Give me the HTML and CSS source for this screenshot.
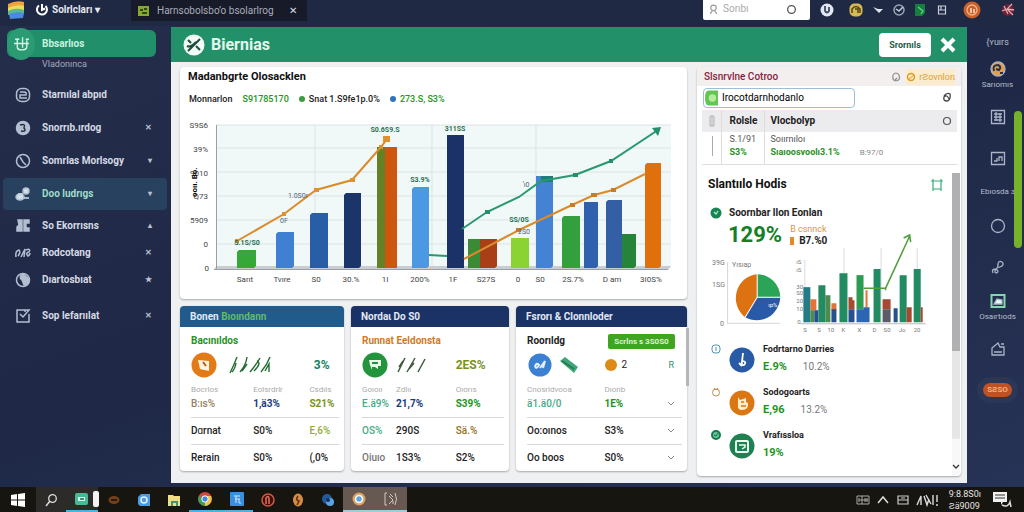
FILE: index.html
```html
<!DOCTYPE html>
<html lang="en">
<head>
    <meta charset="UTF-8">
    <meta name="viewport" content="width=device-width, initial-scale=1.0">
    <title>Biernias</title>
    <link rel="stylesheet" href="styles.css">
</head>
<body>

    <!-- Top bar -->
    <header class="topbar">
        <div class="brand">
            <svg class="logo" viewBox="0 0 16 18"><path d="M0 3Q8-1 16 1V6Q8 4 0 9Z" fill="#f0a23c"/><path d="M0 7Q8 3 16 5V10Q8 8 0 12Z" fill="#e9dc62"/><path d="M0 10Q8 6 16 9V13Q8 11 0 14Z" fill="#5bb98c"/><path d="M1 13Q8 10 16 12L15 17L2 18Z" fill="#4a8be0"/></svg>
            <svg class="swirl" viewBox="0 0 12 14"><path d="M3 2.500A5 5 0 1 0 9.500 3M6 1V7L9 5.500" fill="none" stroke="#fff" stroke-width="2"/></svg>
            <button class="account">Solrlcları <span>▾</span></button>
        </div>
        <div class="tab">
            <svg viewBox="0 0 11 10"><path d="M0 0H11V10H0Z" fill="#86a82b"/><path d="M2 3H5V5H2ZM6 2H9V4H6ZM4 6H9V8H4Z" fill="#2e4a17"/></svg>
            <span>Harnsobolsboʼo bsolarlrog</span>
            <button class="tab-close" aria-label="Close tab">✕</button>
        </div>
        <div class="search">
            <svg viewBox="0 0 10 10"><circle cx="5" cy="3.500" r="2.500" fill="none" stroke="#999"/><path d="M2 9L4 6M8 9L6 6" stroke="#999"/></svg>
            <input type="text" placeholder="Sorıbı" aria-label="Search">
            <svg viewBox="0 0 10 10"><circle cx="5" cy="5" r="3.500" fill="none" stroke="#555" stroke-width="1.200"/></svg>
        </div>
        <div class="tray">
            <svg viewBox="0 0 14 14"><circle cx="7" cy="7" r="6.500" fill="#e3e7f0"/><path d="M5 3V8Q7 11 9 8V4" fill="none" stroke="#3a4a68" stroke-width="1.800"/></svg>
            <svg viewBox="0 0 14 14"><rect x="0.500" y="0.500" width="13" height="13" rx="5" fill="#d6b955"/><path d="M3 10V6Q7 1 11 6V10M6 6H9V10" fill="none" stroke="#4f4414" stroke-width="1.500"/></svg>
            <svg viewBox="0 0 14 14"><path d="M2 4L7 6L12 6L8 10L6 8Z" fill="#dfe4ee"/></svg>
            <svg viewBox="0 0 14 14"><circle cx="7" cy="7" r="5" fill="none" stroke="#99a3b5" stroke-width="1.500"/><path d="M4 6L7 8L11 4" fill="none" stroke="#c4cbd8" stroke-width="1.500"/></svg>
            <svg viewBox="0 0 14 14"><path d="M2 1H12V10L9 13H2Z" fill="#15803d"/><path d="M5 4L10 8L8 11" fill="none" stroke="#63d08b" stroke-width="1.300"/></svg>
            <svg viewBox="0 0 14 14"><path d="M3.500 3V11H10.500V3ZM3 7H11M6 3V7" fill="none" stroke="#c7cddb" stroke-width="1.200"/></svg>
            <svg class="avatar" viewBox="0 0 18 18"><circle cx="9" cy="9" r="8.500" fill="#c9602a"/><circle cx="9" cy="9" r="5" fill="none" stroke="#f2b48c" stroke-width="1.300"/><path d="M8 12V7M11 12V8" stroke="#fbe0cf" stroke-width="1.500"/></svg>
            <svg viewBox="0 0 14 14"><circle cx="7" cy="7" r="6" fill="#6d2036"/><path d="M1 8L6 6L11 1M6 6L13 7M6 6L12 12M3 3L7 11" stroke="#e9a7b0" stroke-width="1.300"/></svg>
        </div>
    </header>

    <div class="shell">

        <!-- Left navigation -->
        <nav class="sidebar">
            <a href="#" class="nav-main">
                <span class="nav-badge"><svg viewBox="0 0 16 16"><path d="M2 4H6M9 2V12M12 4H15M1 8H15M4 3V11Q4 14 8 14Q13 14 13 11V5" fill="none" stroke="#d5f3e4" stroke-width="1.300"/></svg></span>
                Bbsarlıos
            </a>
            <a href="#" class="nav-sub">Vladonınca</a>
            <a href="#" class="nav-item">
                <svg viewBox="0 0 16 16"><rect x="1.500" y="1.500" width="13" height="13" rx="5"/><path d="M5 5H9Q12 5 11 8H5V11H12"/></svg>
                <span>Starnılal abpıd</span>
            </a>
            <a href="#" class="nav-item">
                <svg viewBox="0 0 16 16"><circle cx="8" cy="8" r="6.500" fill="#b4bed0"/><path d="M5 5Q11 3 9 8Q12 12 6 11" stroke="#222c49"/></svg>
                <span>Snorrıb.ırdog</span><i>✕</i>
            </a>
            <a href="#" class="nav-item">
                <svg viewBox="0 0 16 16"><circle cx="8" cy="8" r="6.500"/><path d="M5 4L8 9L11 12"/></svg>
                <span>Somrlas Morlsogy</span><i>▾</i>
            </a>
            <a href="#" class="nav-item selected">
                <svg viewBox="0 0 16 16"><circle cx="11" cy="5" r="3" fill="#cfe0ea"/><ellipse cx="5" cy="11" rx="4" ry="3" fill="#cfe0ea"/><path d="M3 8H8M9 12H14" stroke="#cfe0ea"/></svg>
                <span>Doo ludrıgs</span><i>▾</i>
            </a>
            <a href="#" class="nav-item compact">
                <svg viewBox="0 0 16 16"><path d="M3 2H7V13H2V9L4 7ZM9 2H14V5H11V10H14V13H9Z" fill="#b4bed0"/></svg>
                <span>So Ekorrısns</span><i>▴</i>
            </a>
            <a href="#" class="nav-item compact">
                <svg viewBox="0 0 16 16"><path d="M1 12Q0 6 4 5Q6 7 3 11M6 12L10 4L9 12M11 5Q16 3 14 7Q10 8 13 11Q15 10 15 8"/></svg>
                <span>Rodcotang</span><i>✕</i>
            </a>
            <a href="#" class="nav-item compact">
                <svg viewBox="0 0 16 16"><circle cx="8" cy="8" r="6.500"/><path d="M8 2Q3 5 7 8L9 13Q14 12 14 7Z" fill="#b4bed0"/></svg>
                <span>Dıartosbıat</span><i>★</i>
            </a>
            <a href="#" class="nav-item last">
                <svg viewBox="0 0 16 16"><path d="M14 6V14H2V2H14L8 9L5 6M10 2V4"/></svg>
                <span>Sop lefarıılat</span><i>✕</i>
            </a>
        </nav>

        <!-- Main window -->
        <main class="window">
            <div class="window-head">
                <svg class="window-icon" viewBox="0 0 22 22"><circle cx="11" cy="11" r="10.500" fill="#f2fbf7"/><path d="M5 17L17 5M5 6L8 9M13 12L17 16M4 12Q8 14 13 8" fill="none" stroke="#1c4d3d" stroke-width="2"/></svg>
                <h1>Biernias</h1>
                <button class="save">Srornıls</button>
                <button class="close" aria-label="Close"><svg viewBox="0 0 16 16"><path d="M2 2L14 14M14 2L2 14" stroke="#fff" stroke-width="4"/></svg></button>
            </div>

            <div class="content">
                <section class="left">

                    <!-- Chart -->
                    <div class="card chart-card">
                        <h2>Madanbgrte Olosacklen</h2>
                        <div class="legend">
                            <span>Monnarlon</span>
                            <span class="green">S91785170</span>
                            <span class="dot dot-green">Snat 1.S9fe1p.0%</span>
                            <span class="dot dot-blue green">273.S, S3%</span>
                        </div>
                        <svg class="chart" viewBox="180 118 507 176">
                            <rect x="216" y="125" width="455" height="143" fill="#f1f8f8"/>
                            <path d="M216 125H671M216 148H671M216 172H671M216 196H671M216 220H671M216 244H671M315 125V268M432 125V268M536 125V268" stroke="#dbe3e7" stroke-width="1"/>
                            <path d="M214 269L217 266H671L668 270H214Z" fill="#c9ccd0"/>
                            <path d="M216.500 125V269M214 269.500H668" stroke="#9a9fa5"/>
                            <g>
                                <path d="M237 268V252L239 250H256V266L254 268Z" fill="#36a83a"/>
                                <path d="M276 268V234L278 232H294V266L292 268Z" fill="#3f80d2"/>
                                <path d="M310 268V215L312 213H328V268Z" fill="#295da6"/>
                                <path d="M344 268V195L346 193H361V266L359 268Z" fill="#1b3469"/>
                                <path d="M377 147H386V268H377Z" fill="#648126"/>
                                <path d="M385 147H397V268H385Z" fill="#cf560e"/>
                                <path d="M412 268V189L414 187H429V266L427 268Z" fill="#4b98e3"/>
                                <path d="M447 135H464V268H447Z" fill="#1a3267"/>
                                <path d="M468 239H481V268H468Z" fill="#3d8a36"/>
                                <path d="M480 239H497V266L495 268H480Z" fill="#a93f17"/>
                                <path d="M511 238H529V268H511Z" fill="#8bd332"/>
                                <path d="M536 176H553V266L551 268H536Z" fill="#4482d3"/>
                                <path d="M541 176H553V182H541Z" fill="#1e7d78"/>
                                <path d="M562 268V218L564 216H580V268Z" fill="#34a03d"/>
                                <path d="M584 202H598V266L596 268H584Z" fill="#3061af"/>
                                <path d="M606 268V202L608 200H622V268Z" fill="#355fa5"/>
                                <path d="M622 234H636V266L634 268H622Z" fill="#268439"/>
                                <path d="M645 268V165L647 163H661V266L659 268Z" fill="#e0700c"/>
                            </g>
                            <polyline class="line orange-line" points="237,241 284,214 316,190 352,180 381,147 387,139"/>
                            <path d="M235 239H239V243H235ZM282 212H286V216H282ZM314 188H319V192H314ZM350 178H355V182H350ZM379 145H383V149H379ZM383 136H390V142H383Z" fill="#dd922f"/>
                            <polyline class="line teal-line" points="429,255 447,256"/>
                            <polyline class="line teal-line" points="462,229 487,212 519,197 541,181 575,175 611,161 658,130"/>
                            <path d="M652 128L661 127L658 136ZM485 210H490V214H485ZM573 173H578V177H573ZM609 159H613V163H609Z" fill="#239069"/>
                            <polyline class="line orange-line" points="464,259 519,230 572,205 594,195 613,190 645,174"/>
                            <path d="M516 228H521V232H516ZM570 203H575V207H570ZM591 193H597V197H591ZM611 188H616V192H611Z" fill="#cb7b25"/>
                            <g class="axis" text-anchor="end">
                                <text x="208" y="128">S9S6</text>
                                <text x="208" y="152">39%</text>
                                <text x="208" y="176">9010</text>
                                <text x="208" y="199">Q73</text>
                                <text x="208" y="223">5909</text>
                                <text x="208" y="247">0</text>
                                <text x="209" y="271">0</text>
                            </g>
                            <text class="axis-title" transform="translate(197 197) rotate(-90)">ooıı. Bo.</text>
                            <g class="axis" text-anchor="middle">
                                <text x="245" y="282">Sarıt</text>
                                <text x="282" y="282">Tvıre</text>
                                <text x="316" y="282">S0</text>
                                <text x="351" y="282">30.%</text>
                                <text x="385" y="282">1I</text>
                                <text x="420" y="282">200%</text>
                                <text x="453" y="282">1F</text>
                                <text x="486" y="282">S27S</text>
                                <text x="518" y="282">0</text>
                                <text x="540" y="282">S0</text>
                                <text x="573" y="282">2S.7%</text>
                                <text x="612" y="282">D am</text>
                                <text x="651" y="282">3I0S%</text>
                            </g>
                            <g class="bar-label" text-anchor="middle">
                                <text x="385" y="132">S0.6S9.S</text>
                                <text x="420" y="182">S3.9%</text>
                                <text x="455" y="131">311SS</text>
                                <text x="247" y="245">S.1S/S0</text>
                                <text x="519" y="222">SS/0S</text>
                            </g>
                            <g class="bar-label muted" text-anchor="middle">
                                <text x="298" y="198">1.0S0r</text>
                                <text x="284" y="223">0F</text>
                                <text x="526" y="187">ʼı0</text>
                                <text x="524" y="234">2S0</text>
                            </g>
                        </svg>
                    </div>

                    <!-- Summary cards -->
                    <div class="cards">
                        <article class="card stat-card first">
                            <h3>Bonen <em>Bıoındann</em></h3>
                            <h4 class="green">Bacınıldos</h4>
                            <div class="stat-row">
                                <div class="stat-icons">
                                    <svg class="round" viewBox="0 0 26 26"><circle cx="13" cy="13" r="12.500" fill="#e47a16"/><path d="M7 8L18 9V19L9 17Z" fill="#fff4df"/><path d="M12 10L15 14" stroke="#c25d0e" stroke-width="2"/></svg>
                                    <svg class="scribble" viewBox="0 0 42 20"><path d="M1 18Q5 10 8 2M3 17Q6 14 7 8M11 17Q17 10 18 2M13 16L18 9M21 17Q27 10 31 3M25 16Q33 8 28 6M32 17Q38 10 41 2M36 16L40 9V17" fill="none" stroke="#216d32" stroke-width="1.400"/></svg>
                                </div>
                                <strong class="teal">3%</strong>
                            </div>
                            <table>
                                <thead><tr><th>Bocrlos</th><th>Eolsrdrlr</th><th>Csdıls</th></tr></thead>
                                <tbody>
                                    <tr class="lead"><td class="brown">B:ıs%</td><td class="navy">1,ä3%</td><td class="olive">S21%</td></tr>
                                    <tr><td>Dɑrnat</td><td>S0%</td><td class="lime">E,6%</td></tr>
                                    <tr><td>Rerain</td><td>S0%</td><td>(,0%</td></tr>
                                </tbody>
                            </table>
                        </article>

                        <article class="card stat-card second">
                            <h3>Nordaɩ Do S0</h3>
                            <h4 class="orange">Runnat Eeldonsta</h4>
                            <div class="stat-row">
                                <div class="stat-icons">
                                    <svg class="round" viewBox="0 0 26 26"><circle cx="13" cy="13" r="12.500" fill="#22943b"/><path d="M7 8H19V14H16V17L13 15H10V18L8 13Z" fill="#e8ffe9"/><path d="M10 11H16" stroke="#22943b" stroke-width="2"/></svg>
                                    <svg class="scribble short" viewBox="0 0 30 20"><path d="M2 17L9 3M11 17L19 3M22 17L29 4M3 12L7 6M13 14L18 8" stroke="#3f5b40" stroke-width="1.500"/></svg>
                                </div>
                                <strong class="olive">2ES%</strong>
                            </div>
                            <table>
                                <thead><tr><th>Goıoıı</th><th>Zdlıı</th><th>Oıorıs</th></tr></thead>
                                <tbody>
                                    <tr class="lead"><td class="mint">E.ä9%</td><td class="navy">21,7%</td><td class="green">S39%</td></tr>
                                    <tr><td class="mint">OS%</td><td>290S</td><td class="gold">Sä.%</td></tr>
                                    <tr><td class="grey">Oiuıo</td><td>1S3%</td><td>S2%</td></tr>
                                </tbody>
                            </table>
                        </article>

                        <article class="card stat-card third">
                            <h3>Fsrorı &amp; Clonnloder</h3>
                            <div class="title-row">
                                <h4>Roorıldg</h4>
                                <button class="tag">Scrlns s 3S0S0</button>
                            </div>
                            <div class="stat-row">
                                <div class="stat-icons">
                                    <svg class="round" viewBox="0 0 26 26"><circle cx="13" cy="13" r="11.500" fill="#3b80d2"/><path d="M8 15Q9 10 12 13Q9 18 8 14M13 16L18 9L16 16" fill="none" stroke="#e4f1ff" stroke-width="2"/></svg>
                                    <svg class="ticket" viewBox="0 0 20 18"><path d="M1 5L6 1L19 11L15 17Z" fill="#3ea679"/><path d="M3 5L15 13" stroke="#257b56" stroke-width="2"/></svg>
                                </div>
                                <span class="coin">2</span>
                                <span class="mark">R</span>
                            </div>
                            <table>
                                <thead><tr><th>Cnosrldvooa</th><th>Dıonb</th><th></th></tr></thead>
                                <tbody>
                                    <tr class="lead"><td class="mint">ä1.ä0/0</td><td class="green">1E%</td><td class="chev"><svg viewBox="0 0 8 5"><path d="M1 1L4 4L7 1"/></svg></td></tr>
                                    <tr><td>Oo:oınos</td><td>S3%</td><td class="chev"><svg viewBox="0 0 8 5"><path d="M1 1L4 4L7 1"/></svg></td></tr>
                                    <tr><td>Oo boos</td><td>S0%</td><td class="chev"><svg viewBox="0 0 8 5"><path d="M1 1L4 4L7 1"/></svg></td></tr>
                                </tbody>
                            </table>
                            <span class="card-scroll"></span>
                        </article>
                    </div>
                </section>

                <!-- Details panel -->
                <aside class="card panel">
                    <div class="panel-head">
                        <h3>Slsnrvlne Cotroo</h3>
                        <svg viewBox="0 0 10 10"><path d="M2 3Q5-1 8 3Q10 8 5 9Q1 9 2 3M6 6L3 9" fill="none" stroke="#8d8d8d" stroke-width="1.200"/></svg>
                        <a href="#"><svg viewBox="0 0 10 10"><circle cx="5" cy="5" r="3.500" fill="none" stroke="#e09b1d" stroke-width="1.500"/><path d="M2 8L8 3" stroke="#e09b1d"/></svg>rƧovnlorɩ</a>
                    </div>
                    <div class="panel-search">
                        <div class="field">
                            <svg viewBox="0 0 14 16"><path d="M4 0H14V16H4Q0 16 0 8Q0 0 4 0Z" fill="#65c554"/><circle cx="8" cy="8" r="4" fill="#b5ec9c"/></svg>
                            <input type="text" value="Irocotdarnhodanlo" aria-label="Filter">
                        </div>
                        <svg class="panel-icon" viewBox="0 0 10 12"><path d="M2 4Q5 0 8 2Q9 8 5 9Q1 9 2 5Q5 2 7 7" fill="none" stroke="#444" stroke-width="1.300"/></svg>
                    </div>
                    <table class="grid">
                        <thead>
                            <tr><th><svg viewBox="0 0 6 12"><path d="M1 1H5V11H1ZM3 1V11" fill="none" stroke="#b0b0b6"/></svg></th><th>Rolsle</th><th>Vlocbolyp</th><th><svg class="ring" viewBox="0 0 10 10"><circle cx="5" cy="5" r="3.500" fill="none" stroke="#555" stroke-width="1.200"/></svg></th></tr>
                        </thead>
                        <tbody>
                            <tr><td rowspan="2" class="tick"></td><td>S.1/91</td><td colspan="2">Soıırnıloı</td></tr>
                            <tr><td class="green">S3%</td><td colspan="2"><b class="green">Sıaıoosvoolı3.1%</b><span class="aside">B:97/0</span></td></tr>
                        </tbody>
                    </table>

                    <div class="details">
                        <div class="details-head">
                            <h2>Slantıılo Hodis</h2>
                            <svg viewBox="0 0 12 12"><path d="M2 2H10V10H2ZM0 2H12M2 0V12M10 0V12" fill="none" stroke="#3ba77a" stroke-width="1.200"/></svg>
                        </div>
                        <div class="metric-title">
                            <svg viewBox="0 0 12 12"><circle cx="6" cy="6" r="5.500" fill="#188454"/><path d="M4 5L6 7L8 4" fill="none" stroke="#b8f0d0" stroke-width="1.200"/></svg>
                            <h3>Soornbar llon Eonlan</h3>
                        </div>
                        <div class="metric">
                            <strong>129%</strong>
                            <p><span>B csnnck</span><b><i></i>B7.%0</b></p>
                        </div>
                        <svg class="mini" viewBox="697 232 250 104">
                            <path d="M727.500 262V323H780" fill="none" stroke="#d4d6d8"/>
                            <g class="mini-axis">
                                <text x="712" y="265">39G</text>
                                <text x="712" y="287">1SG</text>
                                <text x="720" y="326">0</text>
                                <text x="732" y="267">Yısıap</text>
                            </g>
                            <path d="M757 297V274A23 23 0 0 1 780 297Z" fill="#2ca458"/>
                            <path d="M757 297H780A23.500 24 0 0 1 745 317Z" fill="#295aa8"/>
                            <path d="M757 297L745 317A23.500 24 0 0 1 757 274Z" fill="#dd7212"/>
                            <path d="M757 273V297H780M757 297L745 317" fill="none" stroke="#fff" stroke-width="1"/>
                            <text x="768" y="307" class="pie-text">ıp%</text>
                            <path d="M843.500 248V322M880.500 248V322M916.500 248V322M804.500 260V322" stroke="#d9dcde"/>
                            <path d="M803 287H810V322H803Z" fill="#237b86"/>
                            <path d="M810 299H816V310H810ZM831 303H836V310H831ZM865 290H867V307H865Z" fill="#e2743a"/>
                            <path d="M810 310H814V322H810ZM825 295H830V322H825Z" fill="#4d8b50"/>
                            <path d="M814 310H818V322H814ZM831 309H836V322H831ZM893 308H897V322H893ZM848 309H854V322H848Z" fill="#28508f"/>
                            <path d="M818 285H825V322H818ZM839 273H847V322H839ZM873 269H880V322H873ZM899 275H906V322H899ZM913 269H920V322H913Z" fill="#238b62"/>
                            <path d="M856 275H863V309H856Z" fill="#2d9b51"/>
                            <path d="M856 309H863V322H856ZM863 307H869V322H863Z" fill="#2c66b3"/>
                            <path d="M848 297H852V300H854V309H848ZM882 299H890V309H882ZM906 307H911V322H906ZM920 307H922V322H920Z" fill="#a54a31"/>
                            <path d="M882 309H890V322H882Z" fill="#5c5b67"/>
                            <path d="M800 323.500H925" stroke="#b6b8ba"/>
                            <path d="M863 288H885L909 236M903 238L909 235L910 242M885 287V290" fill="none" stroke="#4d9d3b" stroke-width="1.500"/>
                            <g class="mini-axis tiny">
                                <text x="796" y="264">ıS</text><text x="796" y="272">ıS</text><text x="796" y="289">30</text><text x="796" y="295">S0</text><text x="796" y="303">20</text><text x="796" y="311">10</text><text x="797" y="324">0</text>
                                <text x="803" y="332">S</text><text x="817" y="332">S</text><text x="827" y="332">10</text><text x="841" y="332">K</text><text x="857" y="332">X</text><text x="872" y="332">D</text><text x="883" y="332">S0</text><text x="898" y="332">Jo</text><text x="913" y="332">20</text>
                            </g>
                        </svg>
                        <ul class="list">
                            <li>
                                <svg class="bullet" viewBox="0 0 10 10"><rect x="1" y="1" width="8" height="8" rx="3" fill="none" stroke="#4f93b5"/><path d="M5 3V7" stroke="#4f93b5"/></svg>
                                <svg class="round" viewBox="0 0 26 26"><circle cx="13" cy="13" r="12.500" fill="#295aa6"/><path d="M14 6L13 15Q12 19 15 18Q18 15 14 14M10 16L13 19" fill="none" stroke="#fff" stroke-width="1.800"/></svg>
                                <div><h4>Fodrtarno Darries</h4><p><b>E.9%</b><span>10.2%</span></p></div>
                            </li>
                            <li>
                                <svg class="bullet" viewBox="0 0 10 10"><circle cx="5" cy="5.500" r="3.500" fill="none" stroke="#c88a4f"/><path d="M3 1L5 3L7 1" fill="none" stroke="#c88a4f"/></svg>
                                <svg class="round" viewBox="0 0 26 26"><circle cx="13" cy="13" r="12.500" fill="#da7614"/><path d="M9 7L11 10L17 8V12L19 13Q20 20 13 20Q8 20 9 14Z" fill="#ffedc9"/><path d="M12 12H15M12 16H17" stroke="#da7614" stroke-width="1.500"/></svg>
                                <div><h4>Sodogoarts</h4><p><b>E,96</b><span>13.2%</span></p></div>
                            </li>
                            <li>
                                <svg class="bullet" viewBox="0 0 10 10"><circle cx="5" cy="5" r="4" fill="#70c39b" stroke="#137b4c" stroke-width="2"/><path d="M3 5L5 6L7 3" fill="none" stroke="#0f6f42"/></svg>
                                <svg class="round" viewBox="0 0 26 26"><circle cx="13" cy="13" r="12.500" fill="#1f8150"/><rect x="7" y="8" width="12" height="11" rx="1" fill="none" stroke="#eafff2" stroke-width="2"/><path d="M10 12H16V14L13 16" fill="none" stroke="#eafff2" stroke-width="1.500"/></svg>
                                <div><h4>Vrafıssloa</h4><p><b>19%</b></p></div>
                            </li>
                        </ul>
                        <div class="scrollbar"><span></span><svg viewBox="0 0 8 5"><path d="M1 1L4 4L7 1" fill="none" stroke="#333" stroke-width="1.300"/></svg></div>
                    </div>
                </aside>
            </div>
        </main>

        <!-- Right rail -->
        <nav class="rail">
            <a href="#" class="rail-text big">{ʏuırs</a>
            <a href="#"><svg viewBox="0 0 16 16"><circle cx="8" cy="8" r="7" fill="#e5a047"/><path d="M4 10Q2 4 8 4Q12 6 9 9L6 8M10 12H13" fill="none" stroke="#233152" stroke-width="2"/></svg>Sarıomıs</a>
            <a href="#"><svg viewBox="0 0 16 16"><path d="M1.500 1.500H14.500V14.500H1.500ZM4 5H12M4 8H12M4 11H12M6 3V12M10 4V13"/></svg></a>
            <a href="#"><svg viewBox="0 0 16 16"><path d="M1.500 2.500H14.500V14.500H1.500ZM4 11H7V8M9 11V7H12V11"/></svg></a>
            <a href="#" class="rail-text">Ebıosda ɜ</a>
            <a href="#"><svg viewBox="0 0 16 16"><circle cx="8" cy="8" r="6.500"/></svg></a>
            <a href="#"><svg viewBox="0 0 16 16"><path d="M3 14Q1 10 6 10Q10 13 6 14Q3 13 8 8M8 6Q8 1 12 3Q15 6 10 8Q7 9 8 5"/></svg></a>
            <a href="#"><svg viewBox="0 0 16 16"><path d="M1.500 2H14.500V14H1.500Z" stroke="#83d8aa" stroke-width="2"/><path d="M4 11L7 6L12 7V11Z" fill="#e5fff3"/></svg>Osaırtıods</a>
            <a href="#"><svg viewBox="0 0 16 16"><path d="M2 14V7L8 2L10 6H14V14ZM4 11H12M11 3H14"/></svg></a>
            <a href="#"><span class="pill">SƧSO</span></a>
            <span class="rail-scroll"></span>
        </nav>
    </div>

    <!-- Taskbar -->
    <footer class="taskbar">
        <button class="start" aria-label="Start"><svg viewBox="0 0 14 14"><path d="M0 2L6 1V6.500H0ZM7 1L14 0V6.500H7ZM0 7.500H6V13L0 12ZM7 7.500H14V14L7 13Z" fill="#fff"/></svg></button>
        <button class="find" aria-label="Find"><svg viewBox="0 0 14 14"><circle cx="8.500" cy="5.500" r="3.800" fill="none" stroke="#ddd" stroke-width="1.300"/><path d="M6 8L2 13" stroke="#ddd" stroke-width="1.500"/></svg></button>
        <button class="running" aria-label="Monitor"><svg viewBox="0 0 14 14"><rect x="0" y="1" width="13" height="12" rx="2" fill="#46b997"/><path d="M3 5H10V9H3Z" fill="#d4f6e9"/><path d="M5 7H9" stroke="#1b6b58" stroke-width="1.500"/></svg></button>
        <span class="sliver"></span>
        <button aria-label="Disk"><svg viewBox="0 0 14 14"><ellipse cx="7" cy="7" rx="5.500" ry="4" fill="#74401c"/><path d="M4 7H10" stroke="#2c1a0e" stroke-width="2"/></svg></button>
        <button aria-label="Mail"><svg viewBox="0 0 14 14"><path d="M1 4L4 1H13V13H3L1 11Z" fill="#4d9be0"/><circle cx="7" cy="7" r="3" fill="none" stroke="#e1f1ff" stroke-width="1.500"/></svg></button>
        <button aria-label="Files"><svg viewBox="0 0 14 14"><path d="M1 2H6L7 3H13V13H1Z" fill="#f0df82"/><path d="M4 8H11V13H9V10H6V13H4Z" fill="#469079"/></svg></button>
        <button class="running" aria-label="Browser"><svg viewBox="0 0 14 14"><circle cx="7" cy="7" r="7" fill="#d4473b"/><path d="M7 7L1 4A7 7 0 0 0 7 14Z" fill="#35a25b"/><path d="M7 7V14A7 7 0 0 0 13 4H7Z" fill="#edc744"/><circle cx="7" cy="7" r="3.200" fill="#4786d8" stroke="#fff"/></svg></button>
        <button class="running" aria-label="Notes"><svg viewBox="0 0 14 14"><rect width="14" height="14" rx="1" fill="#3a8fe0"/><path d="M4 4H10M5 7H10M6 4V11M9 7V11H11" fill="none" stroke="#c8e6ff"/></svg></button>
        <button aria-label="Music"><svg viewBox="0 0 14 14"><circle cx="7" cy="7" r="6" fill="#38130d" stroke="#d55740" stroke-width="1.500"/><path d="M5 11V5Q7 2 8 5V11" fill="none" stroke="#e4705a" stroke-width="1.500"/></svg></button>
        <button aria-label="Paint"><svg viewBox="0 0 14 14"><ellipse cx="7" cy="7" rx="5" ry="6.500" fill="#d48c42"/><path d="M7 3Q4 7 8 8L6 12" fill="none" stroke="#5b2d12" stroke-width="1.500"/></svg></button>
        <button aria-label="Cloud"><svg viewBox="0 0 14 14"><circle cx="6" cy="6" r="5" fill="#245a9b"/><circle cx="9" cy="9" r="4" fill="#5ba1e8"/><circle cx="7" cy="7" r="2" fill="#123255"/></svg></button>
        <button class="open" aria-label="Web"><svg viewBox="0 0 14 14"><circle cx="7" cy="7" r="6.500" fill="#dfa064"/><circle cx="7" cy="7" r="3.500" fill="#5da5da" stroke="#fff" stroke-width="1.500"/></svg></button>
        <button class="open" aria-label="Terminal"><svg viewBox="0 0 14 14"><path d="M3 1H1V13H3M5 4L9 8L5 12M6 2L9 5M11 1Q14 7 11 13M9 9V12" fill="none" stroke="#d3c8c4"/></svg></button>
        <div class="system">
            <svg viewBox="0 0 14 14"><path d="M1 3H13V11H1ZM3 5V9M6 3V11M9 5V9M11 5V9M3 7H12" fill="none" stroke="#aaa"/></svg>
            <svg viewBox="0 0 14 14"><path d="M2 10L7 4L12 10" fill="none" stroke="#ddd" stroke-width="1.500"/></svg>
            <svg viewBox="0 0 14 14"><path d="M2 3H12V11H2ZM2 7H12M5 5H9" fill="none" stroke="#ccc" stroke-width="1.200"/></svg>
            <svg class="wide" viewBox="0 0 22 14"><path d="M1 12L5 3L5 12M8 3L11 12L13 6M10 2L15 11M17 2V12M21 2V9M21 11V13" fill="none" stroke="#ddd" stroke-width="1.400"/></svg>
            <p class="clock">9:8.8S0ı<br>Ƨä9009</p>
            <svg class="notes" viewBox="0 0 20 18"><path d="M1 1H15V11H11L9 14V11H1Z" fill="#f1f1f1"/><path d="M3 4H13M3 7H13" stroke="#333"/><path d="M10 14Q16 17 18 11L19 16" fill="none" stroke="#ddd" stroke-width="1.500"/></svg>
        </div>
    </footer>

</body>
</html>
```
FILE: styles.css
```css
* {
    box-sizing: border-box;
}
body, html {
    height: 100%;
    margin: 0;
}
body {
    display: flex;
    flex-direction: column;
    min-height: 100vh;
    font-family: Roboto, 'Liberation Sans', sans-serif;
    font-size: 10px;
    line-height: 12px;
    color: #222;
    background: #222c49;
}
h1, h2, h3, h4, p, ul {
    margin: 0;
    padding: 0;
}
svg {
    display: block;
    flex: none;
}
button {
    padding: 0;
    border: none;
    background: none;
    font: inherit;
    color: inherit;
    cursor: pointer;
}
input {
    min-width: 0;
    padding: 0;
    border: none;
    outline: none;
    background: none;
    font: inherit;
}
a {
    color: inherit;
    text-decoration: none;
}
table {
    width: 100%;
    border-collapse: collapse;
    table-layout: fixed;
}
th, td {
    padding: 0;
    text-align: left;
}

/* Top bar */
.topbar {
    display: flex;
    flex: none;
    height: 26px;
    background: #202943;
    color: #e4e8f0;
}
.brand {
    display: flex;
    align-items: center;
    width: 131px;
    height: 20px;
    padding-left: 8px;
    font-weight: bold;
}
.logo {
    width: 16px;
    height: 18px;
}
.swirl {
    width: 12px;
    height: 14px;
    margin: 0 4px 0 12px;
}
.account span {
    font-size: 10px;
}
.tab {
    display: flex;
    align-items: center;
    width: 176px;
    height: 21px;
    padding: 0 10px 0 7px;
    background: #161a29;
    color: #a8adb9;
    white-space: nowrap;
}
.tab svg {
    width: 11px;
    height: 10px;
    margin-right: 8px;
}
.tab-close {
    margin-left: auto;
    color: #d8dce5;
}
.search {
    display: flex;
    align-items: center;
    width: 107px;
    height: 20px;
    margin-left: auto;
    padding: 0 13px 2px 5px;
    background: #fff;
    border-radius: 0 0 2px 2px;
}
.search svg {
    width: 11px;
    height: 11px;
}
.search input {
    flex: 1;
    margin-left: 4px;
}
.search input::placeholder {
    color: #aaa;
}
.tray {
    display: grid;
    grid-template-columns: 34px 24px 20px 21px 22px 22px 38px 33px;
    align-items: center;
    justify-items: center;
    height: 19px;
}
.tray svg {
    width: 14px;
    height: 14px;
}
.tray .avatar {
    width: 18px;
    height: 18px;
}

/* Layout */
.shell {
    display: grid;
    grid-template-columns: 171px minmax(0, 1fr) 57px;
    flex: 1;
    padding-bottom: 4px;
    background: linear-gradient(160deg, #242e4b, #1f2947 50%, #273356);
}

/* Sidebar */
.sidebar {
    display: flex;
    flex-direction: column;
    gap: 1px;
    padding: 4px 4px 0 3px;
    color: #d5dae4;
    font-weight: bold;
}
.nav-main {
    display: flex;
    align-items: center;
    gap: 7px;
    height: 27px;
    margin: 0 11px 0 4px;
    background: #21906a;
    border-radius: 6px;
    color: #c9f2df;
}
.nav-badge {
    display: flex;
    align-items: center;
    justify-content: center;
    width: 28px;
    height: 32px;
    background: #2b9b74;
    border-radius: 50%;
}
.nav-badge svg {
    width: 17px;
    height: 17px;
}
.nav-sub {
    height: 20px;
    padding-left: 39px;
    color: #a3abbc;
    font-size: 9px;
    font-weight: normal;
}
.nav-item {
    display: flex;
    align-items: center;
    height: 32px;
    padding: 0 15px 0 12px;
    border-radius: 4px;
    white-space: nowrap;
}
.nav-item svg {
    width: 16px;
    height: 16px;
    margin-right: 11px;
    fill: none;
    stroke: #b4bed0;
    stroke-width: 1.5;
}
.nav-item i {
    margin-left: auto;
    font-size: 8px;
    font-style: normal;
    color: #b9c2d1;
}
.nav-item.selected {
    margin-bottom: 2px;
    background: #28415f;
    color: #9fdcc9;
}
.nav-item.compact {
    height: 26px;
}
.nav-item.last {
    margin-top: 6px;
}

/* Window */
.window {
    display: flex;
    flex-direction: column;
    margin-top: 1px;
    background: #eef0f2;
}
.window-head {
    display: flex;
    align-items: center;
    height: 35px;
    padding: 0 11px 0 12px;
    background: #22916a;
}
.window-icon {
    width: 22px;
    height: 24px;
}
.window-head h1 {
    margin: 0 auto 0 6px;
    font-size: 16px;
    line-height: 20px;
    font-weight: bold;
    color: #e2f8ee;
}
.save {
    width: 52px;
    height: 24px;
    background: #fff;
    border-radius: 4px;
    color: #23604b;
    font-size: 9px;
    font-weight: bold;
}
.close {
    margin-left: 9px;
}
.close svg {
    width: 16px;
    height: 16px;
}
.content {
    display: grid;
    grid-template-columns: minmax(0, 507fr) minmax(0, 264fr);
    gap: 10px;
    flex: 1;
    padding: 5px 6px 7px 9px;
}
.card {
    background: #fff;
    border-radius: 4px;
    box-shadow: 0 1px 2px rgba(0, 0, 0, 0.3);
}

/* Chart */
.chart-card {
    margin-bottom: 7px;
    padding: 3px 0 5px;
}
.chart-card h2 {
    padding-left: 8px;
    font-size: 11px;
    line-height: 14px;
    color: #111;
}
.legend {
    display: flex;
    gap: 10px;
    padding: 9px 0 13px 9px;
    font-size: 9px;
    font-weight: 500;
}
.dot::before {
    content: '';
    display: inline-block;
    width: 6px;
    height: 6px;
    margin-right: 4px;
    border-radius: 50%;
    background: #3d9b3c;
}
.dot-blue::before {
    background: #3272bd;
}
.chart {
    width: 100%;
}
.line {
    fill: none;
    stroke-width: 2;
}
.orange-line {
    stroke: #db8b2b;
}
.teal-line {
    stroke: #27996f;
}
.axis {
    font-size: 8px;
    fill: #444;
}
.axis-title {
    font-size: 8px;
    font-weight: bold;
}
.bar-label {
    font-size: 7px;
    font-weight: bold;
    fill: #257252;
}
.muted {
    font-weight: normal;
    fill: #52657c;
}

/* Text colours */
.green {
    color: #249322;
}
.teal {
    color: #13805f;
}
.orange {
    color: #d17a24;
}
.navy {
    color: #173d7d;
}
.olive {
    color: #78931b;
}
.lime {
    color: #91ad32;
}
.gold {
    color: #947020;
}
.brown {
    color: #99805e;
}
.mint {
    color: #47aa86;
}
.grey {
    color: #777;
}

/* Summary cards */
.cards {
    display: grid;
    grid-template-columns: minmax(0, 164fr) minmax(0, 158fr) minmax(0, 171fr);
    gap: 7px;
}
.stat-card {
    position: relative;
    padding: 0 5px 0 11px;
}
.stat-card h3 {
    height: 21px;
    margin: 0 -5px 7px -11px;
    padding-left: 10px;
    border-radius: 4px 4px 0 0;
    background: #1a3265;
    color: #e2e8f5;
    font-size: 10px;
    line-height: 21px;
}
.first h3 {
    background: #205b8b;
}
.stat-card em {
    font-style: normal;
    color: #62bb66;
}
.stat-card h4 {
    font-size: 10px;
    line-height: 14px;
}
.title-row {
    display: flex;
    justify-content: space-between;
    height: 14px;
    padding-right: 7px;
}
.tag {
    width: 67px;
    height: 15px;
    background: #40a322;
    border-radius: 2px;
    color: #d8f5cb;
    font-size: 8px;
    font-weight: bold;
}
.stat-row {
    display: flex;
    align-items: center;
    height: 26px;
    margin: 4px 0 6px;
}
.stat-row strong {
    font-size: 12px;
}
.stat-icons {
    display: flex;
    align-items: center;
    gap: 12px;
}
.first .stat-icons {
    width: 83%;
}
.second .stat-icons {
    width: 66%;
    gap: 8px;
}
.third .stat-icons {
    width: 50%;
    gap: 6px;
}
.round {
    width: 26px;
    height: 26px;
}
.scribble {
    width: 42px;
    height: 20px;
}
.scribble.short {
    width: 30px;
}
.ticket {
    width: 20px;
    height: 18px;
}
.coin {
    display: flex;
    align-items: center;
    gap: 5px;
}
.coin::before {
    content: '';
    width: 12px;
    height: 12px;
    border-radius: 50%;
    background: #dc8a18;
}
.mark {
    margin: 0 8px 0 auto;
    font-size: 9px;
    color: #279164;
}
.stat-card th {
    height: 12px;
    font-size: 8px;
    line-height: 12px;
    font-weight: normal;
    color: #aaa;
}
.stat-card th:first-child {
    width: 42%;
}
.stat-card th:nth-child(2) {
    width: 38%;
}
.second th:first-child {
    width: 24%;
}
.second th:nth-child(2) {
    width: 42%;
}
.third th:first-child {
    width: 50%;
}
.third th:nth-child(2) {
    width: 40%;
}
.stat-card td {
    height: 27px;
    border-top: 1px solid #d9d9d9;
    font-weight: 500;
}
.stat-card .lead td {
    height: 21px;
    padding-bottom: 5px;
    border-top: none;
}
.lead .navy, .lead .olive, .lead .green {
    font-weight: bold;
}
.chev svg {
    width: 8px;
    height: 5px;
    fill: none;
    stroke: #888;
}
.card-scroll {
    position: absolute;
    top: 22px;
    right: -2px;
    width: 3px;
    height: 58px;
    background: #b4b6ba;
}

/* Details panel */
.panel {
    display: flex;
    flex-direction: column;
}
.panel-head {
    display: flex;
    align-items: center;
    height: 19px;
    padding: 0 6px 0 7px;
    background: #f3efef;
    border-radius: 4px 4px 0 0;
}
.panel-head h3 {
    margin-right: auto;
    font-size: 10px;
    color: #881d42;
    font-weight: 500;
}
.panel-head svg {
    width: 10px;
    height: 10px;
}
.panel-head a {
    display: flex;
    align-items: center;
    gap: 3px;
    margin-left: 5px;
    padding: 2px 0;
    background: #fbecce;
    color: #daa137;
    font-size: 9px;
}
.panel-search {
    display: flex;
    align-items: center;
    justify-content: space-between;
    padding: 2px 9px 2px 6px;
}
.field {
    display: flex;
    align-items: center;
    width: 152px;
    height: 20px;
    padding: 1px;
    border: 1px solid #9dbedb;
    border-radius: 4px;
}
.field svg {
    width: 13px;
    height: 16px;
    margin-right: 4px;
}
.panel-icon {
    width: 10px;
    height: 12px;
}
.grid {
    width: auto;
    margin: 0 4px 0 5px;
    border-bottom: 1px solid #ddd;
}
.grid th {
    height: 22px;
    background: #ececef;
    color: #222;
}
.grid th:first-child {
    width: 19px;
    padding-left: 7px;
}
.grid th:nth-child(2) {
    width: 43px;
}
.grid th:last-child {
    width: 15px;
}
.grid th svg {
    width: 6px;
    height: 12px;
}
.grid th .ring {
    width: 10px;
    height: 10px;
}
.grid th + th, .grid td {
    padding-left: 6px;
    border-left: 1px solid #ddd;
}
.grid th:last-child {
    padding-left: 0;
    border-left: none;
}
.grid th:nth-child(2), .grid tr td:nth-last-child(2) {
    padding-left: 8px;
}
.grid td {
    height: 14px;
    font-size: 9px;
    line-height: 13px;
    color: #555;
}
.grid td.green {
    color: #249322;
    font-weight: bold;
}
.grid .tick {
    border-left: none;
    background: linear-gradient(#aaa, #aaa) 10px 4px / 1px 20px no-repeat;
}
.grid tbody tr:last-child td {
    height: 18px;
    padding-bottom: 5px;
}
.aside {
    margin-left: 20px;
    font-size: 8px;
    color: #888;
}
.details {
    position: relative;
    flex: 1;
    margin-top: 8px;
}
.details-head {
    display: flex;
    align-items: center;
    justify-content: space-between;
    padding: 4px 18px 0 11px;
}
.details-head h2 {
    font-size: 12px;
    line-height: 15px;
    color: #111;
}
.details-head svg {
    width: 12px;
    height: 12px;
}
.metric-title {
    display: flex;
    align-items: center;
    gap: 7px;
    padding: 14px 0 0 13px;
}
.metric-title svg {
    width: 12px;
    height: 12px;
}
.metric-title h3 {
    font-size: 10px;
    line-height: 14px;
}
.metric {
    display: flex;
    align-items: center;
    gap: 8px;
    padding: 3px 0 0 31px;
}
.metric strong {
    font-size: 22px;
    line-height: 24px;
    color: #157f27;
}
.metric span {
    display: block;
    font-size: 9px;
    color: #d7973e;
}
.metric b {
    display: flex;
    align-items: center;
    gap: 5px;
}
.metric i {
    width: 4px;
    height: 8px;
    background: #e08a25;
}
.mini {
    position: relative;
    width: 95%;
    margin-top: -15px;
}
.mini-axis {
    font-size: 7px;
    fill: #777;
}
.tiny {
    font-size: 6px;
}
.pie-text {
    font-size: 6px;
    fill: #fff;
}
.list {
    display: grid;
    gap: 12px;
    padding: 8px 0 0 14px;
    list-style: none;
}
.list li {
    display: flex;
    align-items: center;
    height: 31px;
}
.bullet {
    align-self: flex-start;
    width: 10px;
    height: 10px;
    margin-right: 8px;
}
.list div {
    align-self: flex-start;
    margin-left: 8px;
}
.list h4 {
    font-size: 9px;
    line-height: 10px;
}
.list p {
    display: flex;
    gap: 16px;
    padding-top: 6px;
    line-height: 14px;
}
.list b {
    font-size: 11px;
    color: #1c941c;
}
.list span {
    color: #777;
}
.scrollbar {
    position: absolute;
    top: 0;
    right: 1px;
    bottom: 1px;
    display: flex;
    flex-direction: column;
    align-items: center;
    width: 8px;
    background: linear-gradient(#e6e6e6, #e6e6e6) top / 100% 88% no-repeat, #f8f8f8;
}
.scrollbar span {
    width: 8px;
    height: 59%;
    margin-bottom: auto;
    background: #b0b0b2;
}
.scrollbar svg {
    width: 8px;
    height: 5px;
    margin-bottom: 6px;
}

/* Right rail */
.rail {
    position: relative;
    display: flex;
    flex-direction: column;
    padding: 2px 0 0 4px;
    color: #b5bdcb;
    font-size: 8px;
    line-height: 10px;
}
.rail a {
    display: flex;
    flex-direction: column;
    align-items: center;
    justify-content: center;
    gap: 3px;
    height: 41px;
    white-space: nowrap;
}
.rail .rail-text {
    height: 27px;
}
.rail .big {
    font-size: 9px;
}
.rail svg {
    width: 16px;
    height: 16px;
    fill: none;
    stroke: #aab4c6;
    stroke-width: 1.3;
}
.pill {
    padding: 2px 4px;
    background: #bf5122;
    border-radius: 8px;
    color: #f5b17f;
    font-weight: bold;
    box-shadow: 0 0 0 6px #2a3756;
}
.rail-scroll {
    position: absolute;
    top: 85px;
    right: 2px;
    width: 8px;
    height: 137px;
    background: #78b22a;
    border-radius: 4px;
}

/* Taskbar */
.taskbar {
    display: flex;
    flex: none;
    height: 25px;
    background: #17150f;
    color: #e4e4e4;
}
.taskbar button {
    display: flex;
    align-items: center;
    justify-content: center;
    width: 30px;
    height: 25px;
}
.taskbar svg {
    width: 14px;
    height: 14px;
}
.taskbar .start {
    width: 36px;
}
.taskbar .find, .taskbar .find + .running {
    background: #2c2b29;
}
.taskbar .running {
    width: 32px;
    border-bottom: 2px solid #4db3dd;
}
.sliver {
    width: 6px;
    height: 16px;
    margin: 4px 0 0 -5px;
    background: #f3f3f3;
    border-radius: 2px;
}
.taskbar .open {
    width: 32px;
    background: #665952;
    border-bottom: 2px solid #9bcce0;
}
.system {
    display: flex;
    align-items: center;
    gap: 6px;
    margin-left: auto;
    padding-right: 12px;
}
.taskbar .wide {
    width: 22px;
}
.clock {
    padding: 0 5px;
    font-size: 9px;
}
.taskbar .notes {
    width: 20px;
    height: 18px;
}
```
